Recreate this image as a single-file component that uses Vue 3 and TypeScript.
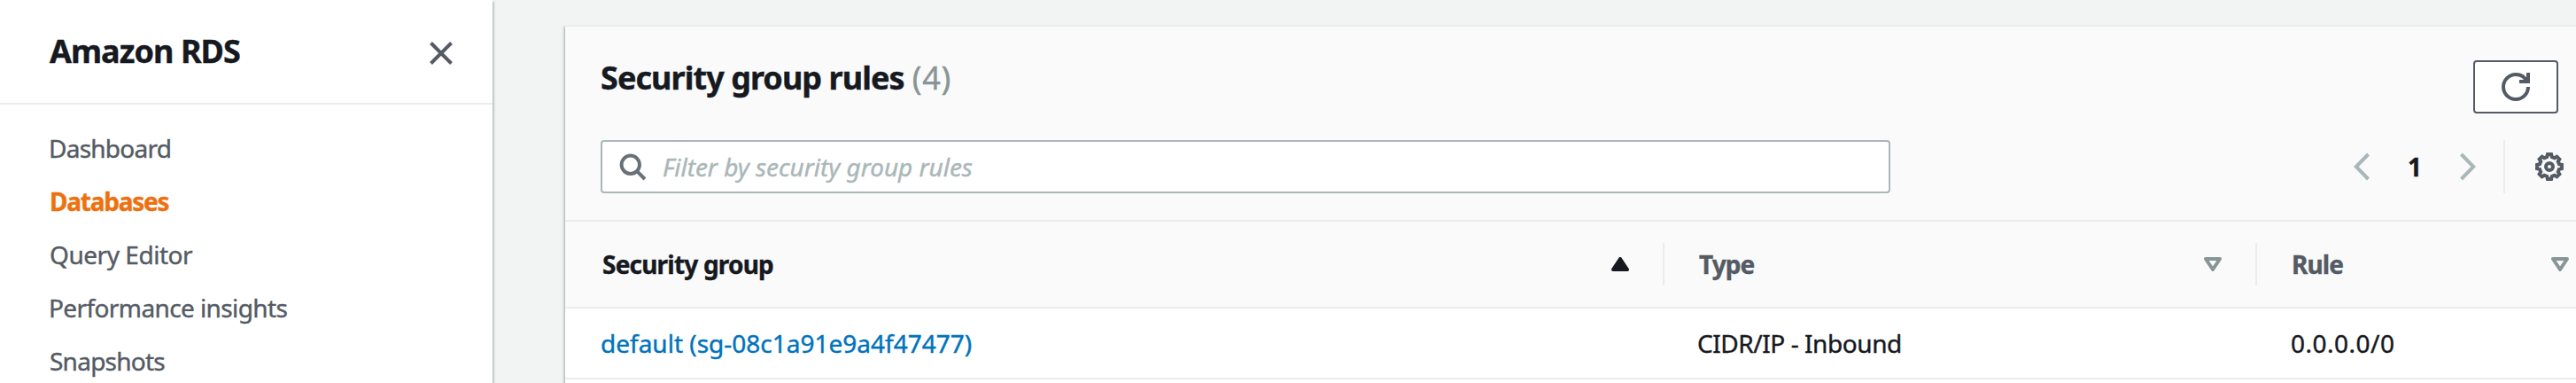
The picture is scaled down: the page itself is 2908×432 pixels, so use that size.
<script setup lang="ts">
interface NavItem { label: string; key: string; active?: boolean }
interface Column { label: string; key: string; sorted?: boolean }

const nav: NavItem[] = [
  { label: 'Dashboard', key: 'dashboard' },
  { label: 'Databases', key: 'databases', active: true },
  { label: 'Query Editor', key: 'query' },
  { label: 'Performance insights', key: 'performance' },
  { label: 'Snapshots', key: 'snapshots' },
]

const columns: Column[] = [
  { label: 'Security group', key: 'group', sorted: true },
  { label: 'Type', key: 'type' },
  { label: 'Rule', key: 'rule' },
]

const rules = [{ group: 'default (sg-08c1a91e9a4f47477)', type: 'CIDR/IP - Inbound', rule: '0.0.0.0/0' }]

// Eight-tooth outline centred in a 32px box.
function gearOutline(): string {
  const points: string[] = []
  for (let tooth = 0; tooth < 8; tooth++) {
    const steps: [number, number][] = [[11.4, -14], [14.1, -8.5], [14.1, 8.5], [11.4, 14]]
    for (const [radius, offset] of steps) {
      const angle = ((tooth * 45 + offset) * Math.PI) / 180
      points.push(`${(16 + radius * Math.sin(angle)).toFixed(2)} ${(16 - radius * Math.cos(angle)).toFixed(2)}`)
    }
  }
  return `M${points.join('L')}Z`
}
const gear = gearOutline()
</script>

<template>
  <div class="page">
    <aside class="sidebar">
      <header class="brand">
        <h2>Amazon RDS</h2>
        <svg class="close" width="32" height="32" viewBox="0 0 32 32"><path d="M4.5 4.5L27.5 27.5M27.5 4.5L4.5 27.5" /></svg>
      </header>
      <nav>
        <a v-for="item in nav" :key="item.key" :class="[item.key, { active: item.active }]">{{ item.label }}</a>
      </nav>
    </aside>

    <main>
      <section class="panel">
        <div class="tools">
          <div class="heading">
            <h1>Security group rules</h1>
            <span class="count">(4)</span>
            <button class="refresh" aria-label="Refresh">
              <svg width="32" height="32" viewBox="0 0 16 16"><path d="M10 5h5V0" /><path d="M15 8a7 7 0 1 1-7-7 6.87 6.87 0 0 1 6.3 4" /></svg>
            </button>
          </div>
          <div class="filters">
            <div class="search">
              <svg width="32" height="32" viewBox="0 0 32 32"><circle cx="13.8" cy="13.8" r="10.2" /><path d="M20.8 20.8L30 30" /></svg>
              <span>Filter by security group rules</span>
            </div>
            <div class="pager">
              <svg class="arrow" width="20" height="32" viewBox="0 0 20 32"><path d="M17.5 2L3.8 16l13.7 14" /></svg>
              <b>1</b>
              <svg class="arrow" width="20" height="32" viewBox="0 0 20 32"><path d="M2.5 2L16.2 16 2.5 30" /></svg>
              <i class="rule-line"></i>
              <svg class="gear" width="32" height="32" viewBox="0 0 32 32"><path :d="gear" /><circle cx="16" cy="16" r="4" /></svg>
            </div>
          </div>
        </div>
        <div class="grid head">
          <div v-for="col in columns" :key="col.key" class="th" :class="[col.key, { sorted: col.sorted }]">
            <span>{{ col.label }}</span>
            <svg width="20" height="16" viewBox="0 0 20 16"><path :d="col.sorted ? 'M10 2L18 14H2Z' : 'M2 2H18L10 14Z'" /></svg>
          </div>
        </div>
        <div v-for="row in rules" :key="row.group" class="grid row">
          <a class="group">{{ row.group }}</a>
          <span class="type">{{ row.type }}</span>
          <span class="rule">{{ row.rule }}</span>
        </div>
      </section>
    </main>
  </div>
</template>

<style>
body { margin: 0; overflow: hidden; }
</style>

<style scoped>
* { box-sizing: border-box; }
.page {
  display: flex;
  width: 2908px;
  height: 432px;
  overflow: hidden;
  background: #f2f3f3;
  color: #16191f;
  font: 28px "Noto Sans", "Open Sans", sans-serif;
  white-space: nowrap;
  -webkit-text-stroke: 0.4px currentColor;
}
svg { display: block; flex: none; fill: none; stroke: currentColor; stroke-width: 4; }
h1, h2 { margin: 0; font-size: 36px; line-height: 50px; font-weight: 700; letter-spacing: -0.95px; }
.sidebar {
  flex: none;
  width: 556px;
  background: #fff;
  box-shadow: 0 2px 2px rgba(0, 28, 36, 0.3), 2px 2px 2px rgba(0, 28, 36, 0.15);
}
.brand {
  display: flex;
  justify-content: space-between;
  height: 118px;
  padding: 33px 42px 0 56px;
  border-bottom: 2px solid #eaeded;
}
.close { margin-top: 11px; color: #545b64; }
nav { display: flex; flex-direction: column; padding: 19px 0 0 55px; color: #545b64; }
nav a { line-height: 60px; letter-spacing: -0.75px; }
nav .active { padding-left: 1px; color: #ec7211; font-weight: 700; letter-spacing: -1.24px; }
nav .query { padding-left: 1px; letter-spacing: -0.46px; }
nav .performance { letter-spacing: -0.6px; }
nav .snapshots { padding-left: 1px; }
main { flex: 1; min-width: 0; padding: 28px 0 0 82px; }
.panel {
  width: 2302px;
  height: 440px;
  background: #fff;
  border-top: 2px solid #eaeded;
  box-shadow: 0 2px 2px rgba(0, 28, 36, 0.3), -2px 2px 2px rgba(0, 28, 36, 0.15);
}
.tools { height: 220px; padding: 32px 52px 0 40px; background: #fafafa; border-bottom: 2px solid #eaeded; }
.heading { display: flex; height: 96px; }
.heading h1, .count { padding-top: 1px; }
.count { margin-left: 9px; font-size: 36px; line-height: 50px; letter-spacing: 0.8px; color: #879596; }
.refresh {
  display: flex;
  align-items: center;
  justify-content: center;
  width: 96px;
  height: 60px;
  margin: 6px 0 0 auto;
  padding: 0;
  border: 2px solid #545b64;
  border-radius: 4px;
  background: #fff;
  color: #545b64;
}
.refresh svg { stroke-width: 2; }
.filters { display: flex; }
.search {
  display: flex;
  flex: none;
  align-items: center;
  width: 1456px;
  height: 60px;
  padding-left: 18px;
  background: #fff;
  border: 2px solid #aab7b8;
  border-radius: 4px;
  color: #687078;
}
.search span { margin-left: 18px; color: #aab7b8; font-style: italic; letter-spacing: -0.05px; }
.pager { display: flex; flex: none; align-items: center; margin-left: 522px; color: #545b64; }
.arrow { color: #aab7b8; }
.pager b { width: 100px; text-align: center; color: #16191f; }
.rule-line { width: 2px; height: 60px; margin-left: 30px; background: #eaeded; }
.gear { margin-left: 34px; }
.grid { display: grid; grid-template-columns: 1241px 669px 392px; align-items: center; }
.head { height: 98px; background: #fafafa; border-bottom: 2px solid #eaeded; }
.th {
  display: flex;
  align-items: center;
  justify-content: space-between;
  height: 48px;
  padding: 0 38px 0 39px;
  border-right: 2px solid #eaeded;
  color: #545b64;
  font-weight: 700;
}
.th span { line-height: 46px; letter-spacing: -0.9px; }
.th.group { padding-left: 42px; }
.th.group span { letter-spacing: -0.8px; }
.th svg { color: #879596; stroke-linejoin: round; }
.th.sorted { color: #16191f; }
.th.sorted svg { color: #16191f; fill: currentColor; }
.row { height: 80px; border-bottom: 2px solid #eaeded; }
.row .group { padding-left: 40px; color: #0073bb; }
.row .type { padding-left: 37px; letter-spacing: -0.44px; }
.row .rule { padding-left: 38px; letter-spacing: 0.5px; }
</style>
